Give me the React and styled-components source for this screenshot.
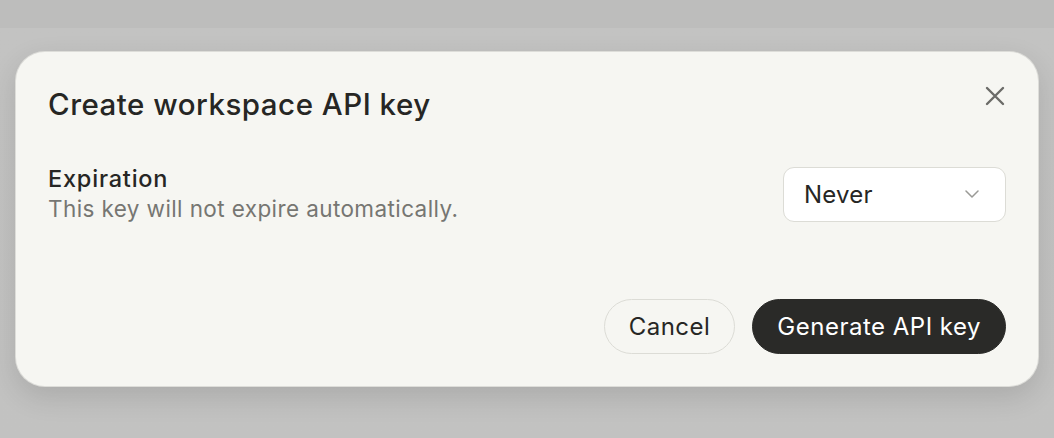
import styled, { createGlobalStyle } from 'styled-components';

// ── Global ─────────────────────────────────────────────────────────────────────

const GlobalStyle = createGlobalStyle`
  html, body {
    margin: 0;
    padding: 0;
  }
  body {
    font-family: Inter, "Noto Sans", "Liberation Sans", sans-serif;
    color: #262624;
  }
  * {
    box-sizing: border-box;
  }
`;

// ── Styled Components ──────────────────────────────────────────────────────────

const Backdrop = styled.div`
  width: 1054px;
  height: 438px;
  display: flex;
  align-items: center;
  justify-content: center;
  background: linear-gradient(#bdbdbc 0, #bdbdbc 28px, #c3c3c2 28px, #c2c2c1 100%);
`;

const Dialog = styled.div`
  width: 1024px;
  height: 336px;
  background: #f6f6f2;
  border: 1px solid rgba(0, 0, 0, 0.1);
  border-radius: 30px;
  padding: 32px;
  display: flex;
  flex-direction: column;
  box-shadow: 0 10px 28px rgba(0, 0, 0, 0.12);
`;

const Header = styled.div`
  display: flex;
  align-items: flex-start;
  justify-content: space-between;
`;

const Title = styled.h2`
  margin: 0;
  font-size: 29.5px;
  font-weight: 500;
  line-height: 40px;
  letter-spacing: 0.5px;
  color: #262624;
`;

const CloseButton = styled.button`
  width: 30px;
  height: 30px;
  margin: -3px -4px 0 0;
  border: none;
  background: none;
  padding: 0;
  display: flex;
  align-items: center;
  justify-content: center;
  color: #6b6b68;
  cursor: pointer;
`;

const Field = styled.div`
  display: flex;
  align-items: center;
  justify-content: space-between;
  margin-top: 40px;
`;

const FieldText = styled.div`
  display: flex;
  flex-direction: column;
`;

const Label = styled.div`
  font-size: 23.5px;
  font-weight: 500;
  line-height: 30px;
  letter-spacing: 0.8px;
  color: #262624;
`;

const Hint = styled.div`
  font-size: 22.5px;
  line-height: 30px;
  letter-spacing: 0.4px;
  color: #767672;
`;

const Select = styled.button`
  width: 223px;
  height: 55px;
  background: #ffffff;
  border: 1px solid #dcdcd6;
  border-radius: 11px;
  padding: 0 26px 0 20px;
  display: flex;
  align-items: center;
  justify-content: space-between;
  font-family: inherit;
  font-size: 24px;
  letter-spacing: 0.2px;
  color: #262624;
  cursor: pointer;

  svg {
    color: #9a9a96;
  }
`;

const Footer = styled.div`
  margin-top: auto;
  display: flex;
  justify-content: flex-end;
  gap: 17px;
`;

const Button = styled.button`
  height: 55px;
  padding: 0 24px;
  border-radius: 28px;
  font-family: inherit;
  font-size: 24px;
  font-weight: 400;
  letter-spacing: 0.5px;
  cursor: pointer;
  border: 1px solid ${(p) => (p.$primary ? '#2a2a28' : '#dcdcd6')};
  background: ${(p) => (p.$primary ? '#2a2a28' : 'transparent')};
  color: ${(p) => (p.$primary ? '#ffffff' : '#262624')};
`;

// ── Icons ──────────────────────────────────────────────────────────────────────

const CloseIcon = () => (
  <svg width="20" height="20" viewBox="0 0 20 20" fill="none">
    <path d="M2 2L18 18M18 2L2 18" stroke="currentColor" strokeWidth="2.4" strokeLinecap="round" />
  </svg>
);

const ChevronIcon = () => (
  <svg width="14" height="8" viewBox="0 0 14 8" fill="none">
    <path d="M1 1L7 7L13 1" stroke="currentColor" strokeWidth="1.5" strokeLinecap="round" strokeLinejoin="round" />
  </svg>
);

// ── Component ──────────────────────────────────────────────────────────────────

export default function App() {
  return (
    <>
      <GlobalStyle />
      <Backdrop>
        <Dialog>
          <Header>
            <Title>Create workspace API key</Title>
            <CloseButton aria-label="Close">
              <CloseIcon />
            </CloseButton>
          </Header>

          <Field>
            <FieldText>
              <Label>Expiration</Label>
              <Hint>This key will not expire automatically.</Hint>
            </FieldText>
            <Select>
              Never
              <ChevronIcon />
            </Select>
          </Field>

          <Footer>
            <Button>Cancel</Button>
            <Button $primary>Generate API key</Button>
          </Footer>
        </Dialog>
      </Backdrop>
    </>
  );
}
